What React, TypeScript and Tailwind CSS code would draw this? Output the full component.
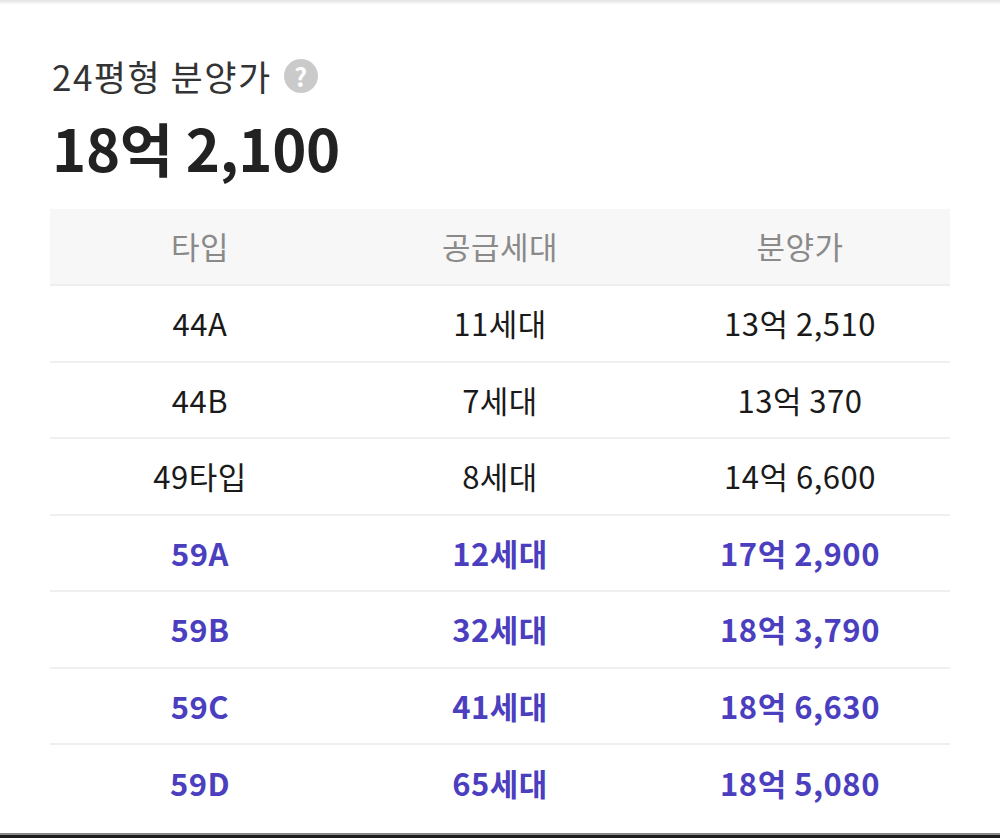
import React from "react";

type Row = { type: string; units: string; price: string; highlight?: boolean };

const rows: Row[] = [
  { type: "44A", units: "11세대", price: "13억 2,510" },
  { type: "44B", units: "7세대", price: "13억 370" },
  { type: "49타입", units: "8세대", price: "14억 6,600" },
  { type: "59A", units: "12세대", price: "17억 2,900", highlight: true },
  { type: "59B", units: "32세대", price: "18억 3,790", highlight: true },
  { type: "59C", units: "41세대", price: "18억 6,630", highlight: true },
  { type: "59D", units: "65세대", price: "18억 5,080", highlight: true },
];

const font = { fontFamily: '"Noto Sans CJK KR", "Noto Sans", sans-serif' };

export default function App() {
  return (
    <div className="flex h-[838px] w-[1000px] flex-col bg-white" style={font}>
      <div className="h-[5px] bg-gradient-to-b from-[#e2e2e2] to-white" />
      <div className="flex-1 px-[50px] pt-[47px]">
        <div className="flex h-[48px] items-center gap-[12px] pl-[2px]">
          <h2 className="text-[35px] leading-[48px] tracking-[1.5px] text-[#333333]">24평형 분양가</h2>
          <span className="flex h-[34px] w-[34px] items-center justify-center rounded-full bg-[#cacaca] text-[25px] font-bold leading-none text-white">
            ?
          </span>
        </div>
        <div className="mt-[13px] h-[68px] pl-[2px] text-[58px] font-bold leading-[68px] tracking-[-0.3px] text-[#222222]">
          18억 2,100
        </div>
        <div className="mt-[28px]">
          <div className="grid h-[77px] grid-cols-3 items-center border-b-2 border-[#eeeeee] bg-[#f7f7f7] text-center text-[31px] tracking-[0.5px] text-[#8a8a8a]">
            <div>타입</div>
            <div>공급세대</div>
            <div>분양가</div>
          </div>
          {rows.map((r, i) => (
            <div
              key={r.type}
              className={`grid h-[76.5px] grid-cols-3 items-center text-center text-[31px] tracking-[0.5px] ${
                i < rows.length - 1 ? "border-b-2 border-[#efefef]" : ""
              } ${r.highlight ? "font-bold text-[#4b3fbf]" : "text-[#1a1a1a]"}`}
            >
              <div>{r.type}</div>
              <div>{r.units}</div>
              <div>{r.price}</div>
            </div>
          ))}
        </div>
      </div>
      <div className="h-[2px] bg-[#8a8a8a]" />
      <div className="h-[3px] bg-[#1c1c1c]" />
    </div>
  );
}
